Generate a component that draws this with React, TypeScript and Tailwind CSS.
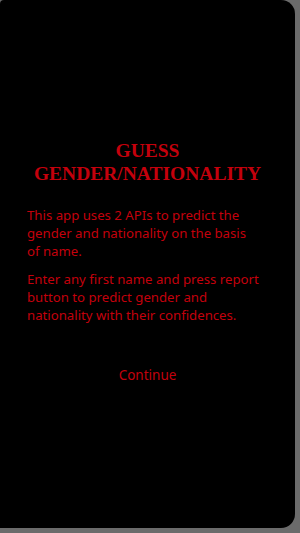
export default function App() {
  return (
    <div className="w-[300px] h-[533px] bg-[#6b6b6b] flex flex-col">
      <div className="w-[295px] h-[528px] bg-black rounded-tr-[14px] rounded-br-[14px] rounded-tl-[4px] flex flex-col pt-[139px]">
        <h1
          className="text-center text-[#c4000c] font-bold text-[19.5px] leading-[23px] px-1"
          style={{ fontFamily: '"Liberation Serif", "Times New Roman", serif' }}
        >
          GUESS
          <br />
          GENDER/NATIONALITY
        </h1>
        <div
          className="ml-[27px] w-[234px] mt-[21px] text-[#c4000c] text-[13.2px] leading-[18px]"
          style={{ fontFamily: '"Noto Sans", "Open Sans", sans-serif' }}
        >
          <p>This app uses 2 APIs to predict the gender and nationality on the basis of name.</p>
          <p className="mt-[10px]">
            Enter any first name and press report button to predict gender and nationality with their
            confidences.
          </p>
        </div>
        <p
          className="text-center mt-[42px] text-[#c4000c] text-[13.5px] leading-[18px]"
          style={{ fontFamily: '"Noto Sans", "Open Sans", sans-serif' }}
        >
          Continue
        </p>
      </div>
    </div>
  )
}
